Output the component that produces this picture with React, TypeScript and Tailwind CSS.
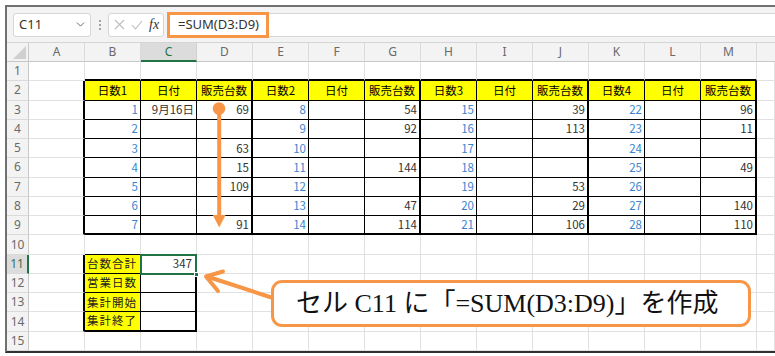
import { ChevronDown } from 'lucide-react';

const COLS = ['A', 'B', 'C', 'D', 'E', 'F', 'G', 'H', 'I', 'J', 'K', 'L', 'M'];

const HEAD = ['日数1', '日付', '販売台数', '日数2', '日付', '販売台数', '日数3', '日付', '販売台数', '日数4', '日付', '販売台数'];

// rows 3..9, columns B..M
const DATA: string[][] = [
  ['1', '9月16日', '69', '8', '', '54', '15', '', '39', '22', '', '96'],
  ['2', '', '', '9', '', '92', '16', '', '113', '23', '', '11'],
  ['3', '', '63', '10', '', '', '17', '', '', '24', '', ''],
  ['4', '', '15', '11', '', '144', '18', '', '', '25', '', '49'],
  ['5', '', '109', '12', '', '', '19', '', '53', '26', '', ''],
  ['6', '', '', '13', '', '47', '20', '', '29', '27', '', '140'],
  ['7', '', '91', '14', '', '114', '21', '', '106', '28', '', '110'],
];

const LABELS = ['台数合計', '営業日数', '集計開始', '集計終了'];

const GRID_R = 'border-r border-r-[#e1e1e1]';
const THIN_R = 'border-r border-r-black';
const THICK_R = 'border-r-2 border-r-black';
const GRID_B = 'border-b border-b-[#e1e1e1]';
const THIN_B = 'border-b border-b-black';
const THICK_B = 'border-b-2 border-b-black';

function rightBorder(r: number, c: number) {
  if (r >= 2 && r <= 9) {
    if (c === 0) return THICK_R;
    if (c >= 1 && c <= 12) return c % 3 === 0 ? THICK_R : THIN_R;
  }
  if (r >= 11 && r <= 14) {
    if (c === 0) return THICK_R;
    if (c === 1) return THIN_R;
    if (c === 2) return THICK_R;
  }
  return GRID_R;
}

function bottomBorder(r: number, c: number) {
  if (c >= 1 && c <= 12) {
    if (r === 1) return THICK_B;
    if (r >= 2 && r <= 8) return THIN_B;
    if (r === 9) return THICK_B;
  }
  if (c >= 1 && c <= 2) {
    if (r >= 10 && r <= 13) return THIN_B;
    if (r === 14) return THICK_B;
  }
  return GRID_B;
}

function Cell({ r, c }: { r: number; c: number }) {
  const borders = `${rightBorder(r, c)} ${bottomBorder(r, c)}`;

  if (r === 2 && c >= 1 && c <= 12) {
    return (
      <div className={`${borders} bg-[#ffff00] flex items-center justify-center text-black`}>
        {HEAD[c - 1]}
      </div>
    );
  }

  if (r >= 3 && r <= 9 && c >= 1 && c <= 12) {
    const v = DATA[r - 3][c - 1];
    const blue = c === 1 || c === 4 || c === 7 || c === 10;
    return (
      <div className={`${borders} flex items-center justify-end pr-[2px] ${blue ? 'text-[#3a86d0]' : 'text-[#333]'}`}>
        {v}
      </div>
    );
  }

  if (r >= 11 && r <= 14 && c === 1) {
    return (
      <div className={`${borders} bg-[#ffff00] flex items-center pl-[2px] tracking-[1px] text-[#222]`}>
        {LABELS[r - 11]}
      </div>
    );
  }

  if (r === 11 && c === 2) {
    return (
      <div className={`${borders} relative flex items-center justify-end pr-[3px] text-[#333]`}>
        347
        <div className="absolute -left-px -top-px -right-[2px] -bottom-[2px] border-2 border-[#217346]" />
        <div className="absolute -right-[4px] -bottom-[4px] w-[5px] h-[5px] bg-[#217346] border border-white" />
      </div>
    );
  }

  return <div className={borders} />;
}

function Toolbar() {
  return (
    <div className="h-[36px] flex items-center bg-[#f3f3f3] border-b border-[#d4d4d4] pl-[6px] font-['Noto_Sans',sans-serif]">
      <div className="w-[78px] h-[24px] bg-white border border-[#d6d6d6] rounded-[3px] flex items-center justify-between pl-[5px] pr-[3px] text-[13px] text-[#333]">
        <span>C11</span>
        <ChevronDown size={13} strokeWidth={1.6} className="text-[#555]" />
      </div>
      <div className="w-[17px] flex flex-col items-center gap-[2px]">
        <span className="w-[2px] h-[2px] rounded-full bg-[#888]" />
        <span className="w-[2px] h-[2px] rounded-full bg-[#888]" />
        <span className="w-[2px] h-[2px] rounded-full bg-[#888]" />
      </div>
      <div className="w-[56px] h-[24px] bg-white border border-[#d6d6d6] rounded-[3px] flex items-center pl-[5px] gap-[6px]">
        <svg width="11" height="11" viewBox="0 0 11 11" className="shrink-0">
          <path d="M1 1 L10 10 M10 1 L1 10" stroke="#bdbdbd" strokeWidth="1.1" fill="none" />
        </svg>
        <svg width="12" height="10" viewBox="0 0 12 10" className="shrink-0">
          <path d="M1 5 L4.5 9 L11 1" stroke="#bdbdbd" strokeWidth="1.1" fill="none" />
        </svg>
        <span className="font-['Liberation_Serif',serif] italic text-[14px] text-[#333] leading-none">fx</span>
      </div>
      <div className="ml-[3px] w-[102px] h-[26px] border-[3px] border-[#f79646] bg-white flex items-center pl-[8px] text-[13px] text-[#333]">
        =SUM(D3:D9)
      </div>
      <div className="flex-1 h-[24px] bg-white border-y border-[#d6d6d6]" />
    </div>
  );
}

function Sheet() {
  const rows = Array.from({ length: 15 }, (_, i) => i + 1);
  const cols = Array.from({ length: 14 }, (_, i) => i);
  return (
    <div className="flex-1 grid grid-cols-[22px_repeat(13,56px)_minmax(0,1fr)] grid-rows-[19px_repeat(15,minmax(0,1fr))] text-[11.5px]">
      {/* corner */}
      <div className="bg-[#f3f3f3] border-r border-b border-[#c8c8c8] flex items-end justify-end pr-[2px] pb-[2px]">
        <svg width="13" height="13" viewBox="0 0 13 13">
          <polygon points="13,0 13,13 0,13" fill="#d0d0d0" />
        </svg>
      </div>
      {COLS.map((l, i) =>
        i === 2 ? (
          <div key={l} className="bg-[#dcdcdc] border-r border-r-[#d0d0d0] border-b-2 border-b-[#217346] flex items-center justify-center text-[12px] text-[#217346] font-['Noto_Sans',sans-serif]">
            {l}
          </div>
        ) : (
          <div key={l} className="bg-[#f3f3f3] border-r border-r-[#dadada] border-b border-b-[#c8c8c8] flex items-center justify-center text-[12px] text-[#6a6a6a] font-['Noto_Sans',sans-serif]">
            {l}
          </div>
        )
      )}
      <div className="bg-[#f3f3f3] border-b border-[#c8c8c8]" />

      {rows.map(r => [
        r === 11 ? (
          <div key={`h${r}`} className="bg-[#dcdcdc] border-r-2 border-r-[#217346] border-b border-b-[#dadada] flex items-center justify-center text-[12px] text-[#3f6f52] font-['Noto_Sans',sans-serif]">
            {r}
          </div>
        ) : (
          <div key={`h${r}`} className="bg-[#f3f3f3] border-r border-r-[#c8c8c8] border-b border-b-[#dadada] flex items-center justify-center text-[12px] text-[#6a6a6a] font-['Noto_Sans',sans-serif]">
            {r}
          </div>
        ),
        ...cols.map(c => <Cell key={`${r}-${c}`} r={r} c={c} />),
      ])}
    </div>
  );
}

function Annotations() {
  return (
    <>
      <svg className="absolute left-0 top-0 pointer-events-none" width="775" height="356" viewBox="0 0 775 356">
        <circle cx="219" cy="108.5" r="6.3" fill="#f79646" />
        <line x1="219.2" y1="108" x2="219.2" y2="217" stroke="#f79646" strokeWidth="4" />
        <polygon points="212.8,215 225.6,215 219.2,227.5" fill="#f79646" />
        <line x1="207" y1="276.5" x2="276" y2="299" stroke="#f79646" strokeWidth="4" strokeLinecap="round" />
        <polyline points="223,271.5 206,276.5 218,291" fill="none" stroke="#f79646" strokeWidth="4" strokeLinecap="round" strokeLinejoin="round" />
      </svg>
      <div className="absolute left-[271px] top-[280px] w-[480px] h-[47px] rounded-[11px] border-[3.5px] border-[#f79646] bg-white flex items-center pl-[22px] text-[26px] text-[#111] font-['Liberation_Serif','Noto_Sans_CJK_JP',serif] whitespace-nowrap">
        セル C11 に「=SUM(D3:D9)」を作成
      </div>
    </>
  );
}

export default function App() {
  return (
    <div className="relative w-[775px] h-[356px] bg-white pt-[5px] pl-[5px] overflow-hidden font-['Noto_Sans_CJK_JP',sans-serif]">
      <div className="flex flex-col h-[348px] border-t-2 border-l-2 border-b-2 border-t-[#707070] border-l-[#707070] border-b-[#303030]">
        <Toolbar />
        <Sheet />
      </div>
      <Annotations />
    </div>
  );
}
